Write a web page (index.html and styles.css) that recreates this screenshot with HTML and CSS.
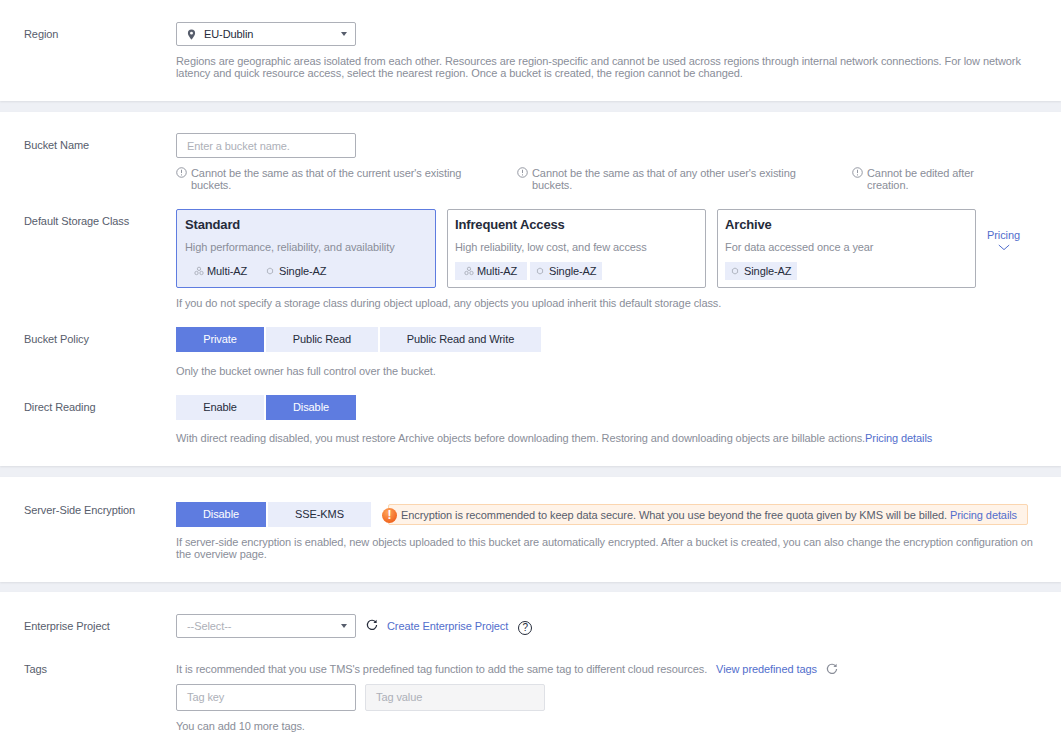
FILE: index.html
```html
<!DOCTYPE html>
<html lang="en">
<head>
<meta charset="utf-8">
<title>Create Bucket</title>
<link rel="stylesheet" href="styles.css">
</head>
<body>
<svg class="defs" width="0" height="0" aria-hidden="true">
  <symbol id="i-info" viewBox="0 0 12 12"><circle cx="6" cy="6" r="5.200" fill="none" stroke="#8a8e99"/><path d="M6 3v3.600M6 8v1.200" stroke="#8a8e99" fill="none"/></symbol>
  <symbol id="i-multi" viewBox="0 0 12 12"><g fill="none" stroke="#a5a9b5"><circle cx="6" cy="3.400" r="2"/><circle cx="3" cy="8.400" r="2"/><circle cx="9" cy="8.400" r="2"/></g></symbol>
  <symbol id="i-single" viewBox="0 0 12 12"><path d="M6 2.400l3.100 1.800v3.600L6 9.600 2.900 7.800V4.200z" fill="none" stroke="#a5a9b5"/></symbol>
  <symbol id="i-refresh" viewBox="0 0 12 12"><path d="M9.900 3.400A4.600 4.600 0 1 0 10.600 6" fill="none" stroke="currentColor" stroke-width="1.200"/><path d="M10.600 .8v3.200H7.400z" fill="currentColor"/></symbol>
</svg>
<main class="page">
  <section class="panel panel-region">
    <div class="row">
      <div class="label">Region</div>
      <div class="field">
        <div class="select select-region">
          <svg class="pin" width="9" height="11" viewBox="0 0 10 12"><path d="M5 .5a4 4 0 0 0-4 4c0 2.600 4 7 4 7s4-4.400 4-7a4 4 0 0 0-4-4zm0 5.600a1.600 1.600 0 1 1 0-3.200 1.600 1.600 0 0 1 0 3.200z" fill="#575d6c"/></svg>
          <span class="select-value">EU-Dublin</span>
          <span class="caret"></span>
        </div>
        <p class="hint hint-region">Regions are geographic areas isolated from each other. Resources are region-specific and cannot be used across regions through internal network connections. For low network latency and quick resource access, select the nearest region. Once a bucket is created, the region cannot be changed.</p>
      </div>
    </div>
  </section>

  <section class="panel panel-bucket">
    <div class="row">
      <div class="label">Bucket Name</div>
      <div class="field">
        <div class="input"><span class="placeholder">Enter a bucket name.</span></div>
        <div class="rules">
          <div class="rule"><svg class="rule-icon"><use href="#i-info"/></svg><span>Cannot be the same as that of the current user's existing buckets.</span></div>
          <div class="rule"><svg class="rule-icon"><use href="#i-info"/></svg><span>Cannot be the same as that of any other user's existing buckets.</span></div>
          <div class="rule"><svg class="rule-icon"><use href="#i-info"/></svg><span>Cannot be edited after creation.</span></div>
        </div>
      </div>
    </div>
    <div class="row row-class">
      <div class="label">Default Storage Class</div>
      <div class="field">
        <div class="cards">
          <div class="card card-active">
            <div class="card-title">Standard</div>
            <div class="card-desc">High performance, reliability, and availability</div>
            <div class="tags">
              <span class="tag"><svg class="az"><use href="#i-multi"/></svg>Multi-AZ</span>
              <span class="tag tag-single"><svg class="az"><use href="#i-single"/></svg>Single-AZ</span>
            </div>
          </div>
          <div class="card">
            <div class="card-title">Infrequent Access</div>
            <div class="card-desc">High reliability, low cost, and few access</div>
            <div class="tags">
              <span class="tag"><svg class="az"><use href="#i-multi"/></svg>Multi-AZ</span>
              <span class="tag tag-single"><svg class="az"><use href="#i-single"/></svg>Single-AZ</span>
            </div>
          </div>
          <div class="card">
            <div class="card-title">Archive</div>
            <div class="card-desc">For data accessed once a year</div>
            <div class="tags">
              <span class="tag tag-single"><svg class="az"><use href="#i-single"/></svg>Single-AZ</span>
            </div>
          </div>
          <div class="pricing">
            <span>Pricing</span>
            <svg width="12" height="7" viewBox="0 0 12 7"><path d="M.8 1l5.200 4.600L11.200 1" fill="none" stroke="#526ecc"/></svg>
          </div>
        </div>
        <p class="hint hint-class">If you do not specify a storage class during object upload, any objects you upload inherit this default storage class.</p>
      </div>
    </div>
    <div class="row row-policy">
      <div class="label">Bucket Policy</div>
      <div class="field">
        <div class="segments">
          <span class="seg seg-on w-88">Private</span>
          <span class="seg w-112">Public Read</span>
          <span class="seg w-161">Public Read and Write</span>
        </div>
        <p class="hint hint-seg">Only the bucket owner has full control over the bucket.</p>
      </div>
    </div>
    <div class="row row-direct">
      <div class="label">Direct Reading</div>
      <div class="field">
        <div class="segments">
          <span class="seg w-88">Enable</span>
          <span class="seg seg-on w-90">Disable</span>
        </div>
        <p class="hint hint-direct">With direct reading disabled, you must restore Archive objects before downloading them. Restoring and downloading objects are billable actions.<a class="link" href="#">Pricing details</a></p>
      </div>
    </div>
  </section>

  <section class="panel panel-sse">
    <div class="row">
      <div class="label label-sse">Server-Side Encryption</div>
      <div class="field">
        <div class="segments">
          <span class="seg seg-on w-90">Disable</span>
          <span class="seg w-103">SSE-KMS</span>
          <div class="alert">
            <span class="alert-icon">!</span>
            <span>Encryption is recommended to keep data secure. What you use beyond the free quota given by KMS will be billed. <a class="link" href="#">Pricing details</a></span>
          </div>
        </div>
        <p class="hint hint-sse">If server-side encryption is enabled, new objects uploaded to this bucket are automatically encrypted. After a bucket is created, you can also change the encryption configuration on the overview page.</p>
      </div>
    </div>
  </section>

  <section class="panel panel-project">
    <div class="row">
      <div class="label">Enterprise Project</div>
      <div class="field project-line">
        <div class="select"><span class="placeholder">--Select--</span><span class="caret"></span></div>
        <svg class="refresh refresh-dark"><use href="#i-refresh"/></svg>
        <a class="link" href="#">Create Enterprise Project</a>
        <span class="help">?</span>
      </div>
    </div>
    <div class="row row-tags">
      <div class="label">Tags</div>
      <div class="field">
        <div class="tag-intro">
          <span class="hint-text">It is recommended that you use TMS's predefined tag function to add the same tag to different cloud resources.</span>
          <a class="link" href="#">View predefined tags</a>
          <svg class="refresh refresh-light"><use href="#i-refresh"/></svg>
        </div>
        <div class="tag-inputs">
          <div class="input input-tag"><span class="placeholder">Tag key</span></div>
          <div class="input input-tag input-disabled"><span class="placeholder">Tag value</span></div>
        </div>
        <p class="hint hint-tags">You can add 10 more tags.</p>
      </div>
    </div>
  </section>
</main>
</body>
</html>
```
FILE: styles.css
```css
* { box-sizing: border-box; }
html, body { margin: 0; height: 100%; }
body {
  background: #eef0f5;
  font: 11px/12px "Liberation Sans", Arial, sans-serif;
  letter-spacing: -.09px;
  color: #575d6c;
  overflow: hidden;
}
.defs { position: absolute; }
.page { display: flex; flex-direction: column; gap: 10px; }
.panel { background: #fff; box-shadow: 0 1px 2px rgba(0, 0, 0, .08); }
.panel-region { height: 101px; padding-top: 22px; }
.panel-bucket { height: 354px; padding-top: 21px; margin-top: 1px; }
.panel-sse { height: 105px; padding-top: 25px; margin-top: 1px; }
.panel-project { height: 160px; padding-top: 22px; }
.row { display: flex; }
.label { width: 176px; padding: 6px 0 0 24px; flex: none; }
.label-sse { padding-top: 2px; }
.field { flex: 1; min-width: 0; }
.row-class { margin-top: 18px; }
.row-policy { margin-top: 18px; }
.row-direct { margin-top: 18px; }
.row-tags { margin-top: 25px; }
.row-tags .label { padding-top: 0; }
.select, .input {
  width: 180px; height: 24px; border: 1px solid #adb0b8; border-radius: 2px;
  background: #fff; display: flex; align-items: center; padding: 0 10px;
}
.select { position: relative; }
.pin { margin-right: 8px; flex: none; }
.select-value { color: #252b3a; }
.placeholder { color: #adb0b8; }
.caret {
  position: absolute; right: 8px; top: 9px; width: 0; height: 0;
  border: 3.500px solid transparent; border-top: 4px solid #575d6c; border-bottom: 0;
}
.input { height: 25px; }
.hint { margin: 0; color: #8a8e99; padding-right: 24px; }
.hint-text { color: #8a8e99; }
.hint-region { margin-top: 9px; }
.hint-class { margin-top: 9px; }
.hint-seg { margin-top: 13px; }
.hint-direct { margin-top: 12px; }
.hint-sse { margin-top: 9px; }
.hint-tags { margin-top: 9px; }
.rules { display: grid; grid-template-columns: 341px 335px 128px; margin-top: 9px; }
.rule { display: flex; gap: 4px; color: #8a8e99; padding-right: 40px; }
.rule:last-child { padding-right: 0; }
.rule-icon { width: 11px; height: 11px; flex: none; }
.cards { display: flex; gap: 11px; align-items: flex-start; }
.card {
  width: 259px; height: 79px; border: 1px solid #adb0b8; border-radius: 2px;
  padding: 8px 7px 0; background: #fff;
}
.card-active { width: 260px; padding-left: 8px; background: #e9edfa; border-color: #5e7ce0; }
.card-title { font-size: 13px; line-height: 14px; font-weight: 700; color: #252b3a; letter-spacing: -.15px; }
.card-desc { margin-top: 8px; color: #8a8e99; line-height: 14px; }
.tags { display: flex; gap: 3px; margin-top: 8px; }
.tag {
  display: flex; align-items: center; height: 18px; padding: 0 0 0 9px;
  background: #e9edfa; color: #252b3a; width: 72px; white-space: nowrap;
}
.tag-single { padding-left: 5px; }
.az { width: 10px; height: 10px; margin-right: 3px; flex: none; }
.tag-single .az { margin-right: 4px; }
.pricing {
  color: #526ecc; display: flex; flex-direction: column; align-items: center; gap: 3px;
  padding-top: 20px;
}
.segments { display: flex; gap: 2px; align-items: center; }
.seg {
  height: 25px; padding-bottom: 1px; display: flex; align-items: center; justify-content: center;
  background: #e9edfa; color: #252b3a;
}
.seg-on { background: #5e7ce0; color: #fff; }
.w-88 { width: 88px; }
.w-90 { width: 90px; }
.w-103 { width: 103px; }
.w-112 { width: 112px; }
.w-161 { width: 161px; }
.link { color: #526ecc; text-decoration: none; }
.alert {
  position: relative; margin-left: 15px; width: 640px; height: 21px;
  background: #fff3e8; border: 1px solid #fbd6b0; border-radius: 2px;
  display: flex; align-items: center; padding-left: 12px; color: #575d6c;
}
.alert-icon {
  position: absolute; left: -7px; top: 3px; width: 15px; height: 15px; border-radius: 50%;
  background: radial-gradient(circle at 40% 30%, #ffa65c, #f0641e 75%);
  color: #fff; font-weight: 700; font-size: 12px; line-height: 15px; text-align: center;
}
.project-line { display: flex; align-items: center; height: 24px; }
.refresh { width: 12px; height: 12px; flex: none; }
.refresh-dark { color: #252b3a; margin: -2px 9px 0 10px; }
.refresh-light { color: #8a8e99; margin-left: 9px; }
.help {
  width: 14px; height: 14px; margin: 3px 0 0 10px; border: 1px solid #252b3a; border-radius: 50%;
  color: #252b3a; font-size: 10px; line-height: 12px; text-align: center;
}
.tag-intro { display: flex; align-items: center; }
.tag-intro .link { margin-left: 9px; }
.tag-inputs { display: flex; gap: 9px; margin-top: 9px; }
.input-tag { height: 27px; padding-bottom: 1px; }
.input-disabled { background: #f5f5f6; border-color: #dfe1e6; }
```
